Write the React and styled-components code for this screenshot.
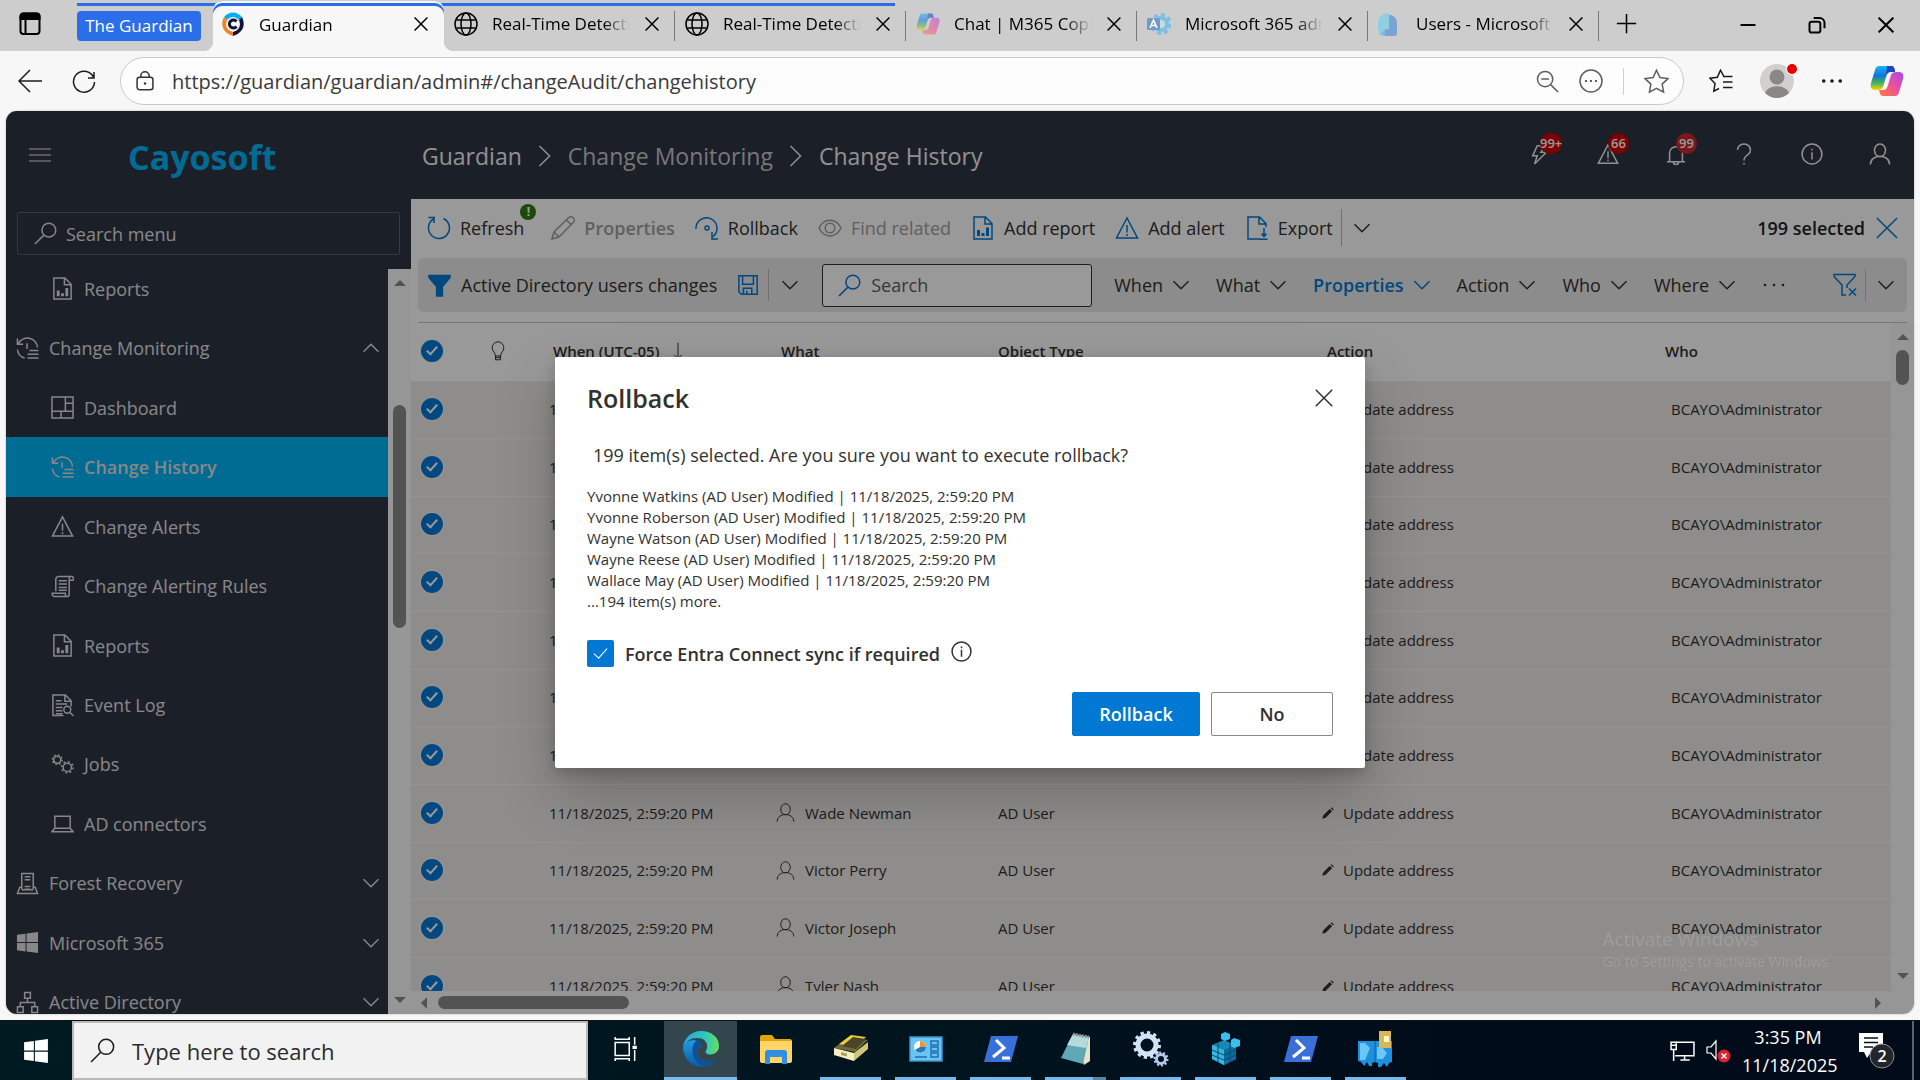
import React from "react";
import styled, { createGlobalStyle, css } from "styled-components";

const GlobalStyle = createGlobalStyle`
  *, *::before, *::after { box-sizing: border-box; }
  html, body, #root { height: 100%; }
  body {
    margin: 0;
    overflow: hidden;
    font-family: "Open Sans", "Noto Sans", "Liberation Sans", sans-serif;
    font-size: 18px;
    color: #323130;
  }
  button, input { font: inherit; color: inherit; }
  button { margin: 0; padding: 0; border: 0; background: none; }
  ul { list-style: none; margin: 0; padding: 0; }
  svg { display: block; flex: none; }
`;

/* ---------- icons ---------- */

const shapes = {
  menu: <path d="M1 6h22M1 12h22M1 18h22" />,
  chevronRight: <path d="M6 1l11 11L6 23" />,
  chevronDown: <path d="M2 7l10 10L22 7" />,
  chevronUp: <path d="M2 17L12 7l10 10" />,
  search: <><circle cx="15.5" cy="8.5" r="7.2" /><path d="M10.3 13.7L1 23" /></>,
  reports: <><path d="M3 1h11.5L21 7.5V23H3zM14 1v7h7" /><path d="M7.5 20v-6M12 20v-3M16.5 20v-8.5" strokeWidth="3" /></>,
  history: <><path d="M1.500 1.500v6h6M2.500 7A10.500 10.500 0 0 1 22.400 11M1.500 13A10.500 10.500 0 0 0 9 22M11.500 6.500v6" /><path d="M14 14h9.500M12 18h11.500M12 22h11.500" /></>,
  dashboard: <path d="M1 1h22v22H1zM15 1v15M15 7.5h8M1 16h22M10.5 16v7" />,
  warning: <><path d="M12 2L22.5 22H1.5z" /><path d="M12 9v7.5M12 18v2" /></>,
  rules: <><path d="M5 17V4.5A3 3 0 0 1 8 1.5h12.5a2.5 2.5 0 0 1 2.5 4h-4M20.5 1.5A3 3 0 0 0 19 4.5V20a2.5 2.5 0 0 1-2.5 2.5H4a2.7 2.7 0 0 1-2.7-3.5H15v1.5a2 2 0 0 0 2 2" /><path d="M8 6h8.5M8 9.5h8.5M8 13h8.5M8 16h8.5" /></>,
  eventLog: <><path d="M13 22.5H2V1h13l6 6v6M14.5 1v6.5H21" /><path d="M5 7h6M5 10.5h12M5 14h7M5 17.5h7M5 20.5h7" /><circle cx="17" cy="16.5" r="3.6" /><path d="M19.5 19l4 4" /></>,
  gears: <><circle cx="6.5" cy="7" r="3.7" /><circle cx="6.5" cy="7" r="5" strokeDasharray="1.9 2" /><circle cx="17" cy="15" r="4.3" /><circle cx="17" cy="15" r="5.9" strokeDasharray="2.1 2.5" /></>,
  laptop: <path d="M4 4.5h16V17H4zM4 17l-3 3.5h22L20 17" />,
  server: <><path d="M6 18V1.5h12V18M9 5h6M9 8h6M9 15h6M9 18h6" /><path d="M6 16H4l-2.5 6.5h21L20 16h-2M6 18.5h12" /></>,
  windows: <path d="M1 4l9-1.2v8.7H1zM11 2.6L23 1v10.5H11zM1 12.6h9v8.7L1 20zM11 12.6h12V23l-12-1.6z" fill="currentColor" stroke="none" />,
  org: <path d="M9 1.5h6v6H9zM1.5 16.5h6v6h-6zM16.5 16.5h6v6h-6zM12 7.5V12M4.5 16.5V12h15v4.5" />,
  bolt: <path d="M9 3h9l-5 7h6L6 23l3-9H4z" />,
  bell: <path d="M2 20.5h20M5 20.5V11a7 7 0 0 1 14 0v9.5M9 20.5a3 3 0 0 0 6 0" />,
  question: <path d="M5 7.5a7 6.5 0 1 1 11.5 5C13.5 14.5 12 16 12 19M12 21.5v2" />,
  info: <><circle cx="12" cy="12" r="10.8" /><path d="M12 10v8M12 6.2v2" /></>,
  user: <><ellipse cx="12" cy="8" rx="6" ry="7" /><path d="M1.5 23.5c0-12 21-12 21 0" /></>,
  refresh: <path d="M7 1v6M8 1.500H1.500M6.500 3A10.500 10.500 0 1 0 16.500 2.500" />,
  pencil: <path d="M1 23l2-7L17.5 1.8a3 3 0 0 1 4.7 4.7L8 21zM15.500 4l4.500 4.500M3 16l5 5" />,
  rollback: <><path d="M1 13A10.5 10.5 0 1 1 17.5 21" /><path d="M17 16v7h6" /><circle cx="12" cy="12" r="2" /></>,
  eye: <><path d="M1 12C6 1.5 18 1.5 23 12 18 22.5 6 22.5 1 12z" /><circle cx="12" cy="12" r="4.8" /></>,
  exportDoc: <><path d="M15 23H3V1h11.500L21 7.500V11M14 1v7h7" /><path d="M19 12v8M16.500 17.500L19 20.500l2.500-3M14.500 23.200h8" /></>,
  cross: <path d="M1 1l22 22M23 1L1 23" />,
  funnel: <path d="M1 1.5h22v2l-8 9.5v10H9V13L1 3.5z" fill="currentColor" />,
  funnelClear: <path d="M13 22H9V12L1 3.5v-2h21v2L14 12v3M16 15.5l7 7M23 15.5l-7 7" />,
  save: <path d="M1 1h22v22H4l-3-3zM5.5 1v10h13V1M6.5 23v-7h10v7M10.5 23v-4" />,
  bulb: <path d="M9 18c0-4-4-5.5-4-10a7 7 0 0 1 14 0c0 4.5-4 6-4 10zM9 18v4.5h6V18M9 20h6" />,
  arrowDown: <path d="M12 1v21M7 17l5 5 5-5" />,
  dots: <><circle cx="3" cy="12" r="1.3" fill="currentColor" stroke="none" /><circle cx="12" cy="12" r="1.3" fill="currentColor" stroke="none" /><circle cx="21" cy="12" r="1.3" fill="currentColor" stroke="none" /></>,
  dotsBold: <><circle cx="3" cy="12" r="2" fill="currentColor" stroke="none" /><circle cx="12" cy="12" r="2" fill="currentColor" stroke="none" /><circle cx="21" cy="12" r="2" fill="currentColor" stroke="none" /></>,
  smallPencil: <path d="M2 22l2-6L15 5l4 4L8 20zM16.5 3.5L18 2l4 4-1.5 1.5z" fill="currentColor" stroke="none" />,
  globe: <><circle cx="12" cy="12" r="11" /><ellipse cx="12" cy="12" rx="5" ry="11" /><path d="M2.5 8h19M2.5 16h19" /></>,
  sidebarTabs: <><rect x="2.5" y="1.5" width="19" height="20.5" rx="3" /><path d="M2.5 7V4.5a3 3 0 0 1 3-3h13a3 3 0 0 1 3 3V7z" fill="currentColor" /><path d="M7.5 7v15" /></>,
  plus: <path d="M12 1v22M1 12h22" />,
  minus: <path d="M2 12h20" />,
  restore: <><rect x="3" y="8" width="13" height="13" rx="2.5" /><path d="M8 3.5h7a6 6 0 0 1 6 6V16" /></>,
  back: <path d="M24 12H1M12 1L1 12l11 11" />,
  reload: <path d="M22 3v6h-6M22.5 13A10.5 10.5 0 1 1 20.5 6.5L22 9" />,
  lock: <><rect x="2.5" y="7.5" width="19" height="15" rx="3" /><path d="M7 7.5V6a5 5 0 0 1 10 0v1.5" /><circle cx="12" cy="15" r="1.5" fill="currentColor" stroke="none" /></>,
  zoomOut: <><circle cx="9.5" cy="9.5" r="8" /><path d="M15.5 15.5L23 23M5.5 9.5h8" /></>,
  circleDots: <><circle cx="12" cy="12" r="11" /><path d="M6 12h2M11 12h2M16 12h2" strokeWidth="2.2" /></>,
  star: <path d="M12 1.2l3.300 7 7.700 1-5.600 5.300 1.400 7.700L12 18.500l-6.800 3.700 1.400-7.700L1 9.200l7.700-1z" />,
  favorites: <path d="M15.500 7.500l-.8-.3L11.500 1.200l-3.200 7L1 9.200l5 5.300-1.200 7.700L10 19.500M14 7.500h9.500M14 13h9.500M14 18.500h9.500" />,
  taskView: <><path d="M2 6h13v12H2zM2 1v2h13V1M2 23v-2h13v2M20 1v7M20 13v10" /><path d="M20 9v3" strokeWidth="4" /></>,
  network: <><path d="M6 4h17v13H5M14 17v4M10 21h9" /><path d="M1 4h5v7H1zM1 7h5M3.5 11v11" /></>,
};

function Icon({ name, size = 24, weight = 1.5, color }) {
  return (
    <svg width={size} height={size} viewBox="0 0 24 24" fill="none" stroke="currentColor"
      strokeWidth={weight * (24 / size)} color={color} aria-hidden="true">
      {shapes[name]}
    </svg>
  );
}

function GuardianLogo() {
  return (
    <svg width="24" height="24" viewBox="0 0 24 24" aria-hidden="true">
      <path d="M3 5C8-1 16-1 21 5l-3 3C14 4 10 4 6 8z" fill="#00b0f0" />
      <path d="M3 5C-1 13 2 21 12 24v-4C5 18 4 13 6 8z" fill="#f58220" />
      <path d="M21 5c4 8 1 16-9 19v-4c7-2 8-7 6-12z" fill="#12123c" />
      <path d="M15.500 9.500a4 4 0 1 0 0 5" fill="none" stroke="#12123c" strokeWidth="3" />
    </svg>
  );
}

function CopilotLogo({ size, faded }) {
  const id = faded ? "cpf" : "cp";
  return (
    <svg width={size} height={size} viewBox="0 0 34 34" opacity={faded ? 0.55 : 1} aria-hidden="true">
      <defs>
        <linearGradient id={id + "a"} x1="0" y1="0" x2="0" y2="1">
          <stop offset="0" stopColor="#1ab6f5" /><stop offset=".4" stopColor="#1574d8" />
          <stop offset=".7" stopColor="#3fb15d" /><stop offset="1" stopColor="#ffd500" />
        </linearGradient>
        <linearGradient id={id + "b"} x1="1" y1="0" x2="0" y2="1">
          <stop offset="0" stopColor="#a54bf0" /><stop offset=".5" stopColor="#ee4f9c" />
          <stop offset="1" stopColor="#ff7a3c" />
        </linearGradient>
      </defs>
      <path d="M9 2h12c3 0 3 3 4 6h-4c-3 0-4 2-5 5l-3 10c-1 2-2 3-5 3H5c-4 0-5-3-4-7L5 6c1-3 2-4 4-4z" fill={`url(#${id}a)`} />
      <path d="M25 32H13c-3 0-3-3-4-6h4c3 0 4-2 5-5l3-10c1-2 2-3 5-3h3c4 0 5 3 4 7l-4 13c-1 3-2 4-4 4z" fill={`url(#${id}b)`} />
      <path d="M17 2h5c2 0 3 3 3 6h-5c-2 0-3 1-4 3z" fill="#1946c0" />
    </svg>
  );
}

function AdminLogo() {
  return (
    <svg width="24" height="24" viewBox="0 0 24 24" aria-hidden="true">
      <circle cx="14" cy="12" r="8" fill="#7fbfe0" />
      <circle cx="14" cy="12" r="9" fill="none" stroke="#7fbfe0" strokeWidth="4" strokeDasharray="4 3" />
      <circle cx="14" cy="12" r="4" fill="#cdd9df" />
      <rect x="0" y="6" width="13" height="12" rx="1.500" fill="#6d9cc8" />
      <path d="M3 16l3.500-8L10 16M4.500 13.500h4" fill="none" stroke="#fff" strokeWidth="1.600" />
    </svg>
  );
}

function UsersLogo() {
  return (
    <svg width="24" height="24" viewBox="0 0 24 24" aria-hidden="true">
      <path d="M6 4c6-3 12 0 13 6v11c0 2-1 3-3 3H6z" fill="#7ba4d2" />
      <path d="M0 12C0 5 4 1 11 1v16c-5 0-7 2-9 6-1-2-2-5-2-11z" fill="#8ed0e0" />
      <path d="M7 24V17h4c-4 0-7 2-9 5 1 1 3 2 5 2z" fill="#75bfe6" />
    </svg>
  );
}

function Avatar() {
  return (
    <svg width="34" height="34" viewBox="0 0 34 34" aria-hidden="true">
      <circle cx="17" cy="17" r="17" fill="#d2d0ce" />
      <circle cx="17" cy="13" r="7.500" fill="#8a8886" />
      <path d="M5 29c3-9 21-9 24 0a17 17 0 0 1-24 0z" fill="#8a8886" />
    </svg>
  );
}

const appArt = {
  edge: (
    <>
      <defs>
        <linearGradient id="eg1" x1="0" y1="0" x2="1" y2="0"><stop offset="0" stopColor="#2aa6e0" /><stop offset=".6" stopColor="#2fc6c0" /><stop offset="1" stopColor="#66e05a" /></linearGradient>
        <linearGradient id="eg2" x1="0" y1="0" x2="0" y2="1"><stop offset="0" stopColor="#1b9de2" /><stop offset="1" stopColor="#0c59a4" /></linearGradient>
      </defs>
      <path d="M18 0C8 0 0 8 0 18c2-8 8-11 14-11 8 0 11 5 10 10-1 3-2 4-1 5 2 3 13 2 13-7C36 6 28 0 18 0z" fill="url(#eg1)" />
      <path d="M0 17C1 28 8 36 19 36c6 0 11-3 14-7-9 4-19 0-19-8 0-3 2-5 5-6-2-8-17-8-19 2z" fill="url(#eg2)" />
      <path d="M14 9C7 13 7 32 22 35c4 0 9-3 11-6-9 4-19 0-19-8 0-3 2-5 5-6-1-4-3-5-5-6z" fill="#10509a" />
    </>
  ),
  explorer: (
    <>
      <path d="M2 6c0-1 1-2 2-2h10l3 4h15c1 0 2 1 2 2v20H2z" fill="#e5a50a" />
      <path d="M2 10h32v20c0 1-1 2-2 2H4c-1 0-2-1-2-2z" fill="#ffd567" />
      <path d="M7 33V22c0-2 1-3 3-3h16c2 0 3 1 3 3v11h-5v-7H12v7z" fill="#2f8fe0" />
    </>
  ),
  toolbox: (
    <>
      <path d="M1 17L16 6l19 3-13 12z" fill="#6f6a3a" />
      <path d="M6 13L18 4l15 2-11 10z" fill="#e8cf3a" />
      <path d="M9 15l11-9 13 2-10 10z" fill="#4a4526" />
      <path d="M1 17l20 5v8L1 24z" fill="#f4f0c0" />
      <path d="M21 22l14-11v7L21 30z" fill="#cfc67a" />
      <path d="M8 21l6 1.500v3L8 24z" fill="#a8a060" />
    </>
  ),
  panel: (
    <>
      <rect x="2" y="6" width="32" height="24" fill="#6cc5f0" stroke="#3b93d0" strokeWidth="1.500" />
      <circle cx="12" cy="16" r="6" fill="#fff" /><path d="M12 16v-6a6 6 0 0 1 6 6z" fill="#f0962c" /><path d="M12 16h6a6 6 0 0 1-11 3z" fill="#2878c0" />
      <path d="M23 10h7v4h-7zM23 16h7v4h-7zM23 22h7v4h-7zM7 26h12" fill="none" stroke="#1c6fb4" strokeWidth="1.500" />
    </>
  ),
  shell: (
    <>
      <path d="M8 5h27l-7 26H1z" fill="#3a6fd8" />
      <path d="M13 9l8 8-11 9M19 27h8" fill="none" stroke="#fff" strokeWidth="3" />
    </>
  ),
  notepad: (
    <>
      <path d="M16 3l16 3v24l-6 4z" fill="#e8e4cc" />
      <path d="M15 3l16 3-6 27L3 27z" fill="#5fa9b6" /><path d="M15 3l16 3-3 11L9 14z" fill="#b4dade" />
      <path d="M15 3l16 3" stroke="#888" strokeWidth="3" strokeDasharray="2 1" />
    </>
  ),
  services: (
    <>
      <circle cx="14" cy="14" r="9" fill="none" stroke="#d3e3f5" strokeWidth="5" />
      <circle cx="14" cy="14" r="12.500" fill="none" stroke="#d3e3f5" strokeWidth="3" strokeDasharray="3.300 3.200" />
      <circle cx="28" cy="28" r="4.500" fill="none" stroke="#b3cbe8" strokeWidth="3" />
      <circle cx="28" cy="28" r="6.500" fill="none" stroke="#b3cbe8" strokeWidth="2" strokeDasharray="2 2" />
    </>
  ),
  registry: (
    <>
      <path d="M4 14l12-5 12 5v14l-12 6-12-6z" fill="#1787b8" />
      <path d="M4 14l12 5v15L4 28z" fill="#35b6dc" /><path d="M16 19l12-5v14l-12 6z" fill="#0d6c9c" />
      <path d="M4 19l12 5 12-5M4 24l12 5 12-5M10 12v19M22 12v19" stroke="#0b4c70" fill="none" />
      <path d="M17 1l5 2v5l-5 2-4-2V3zM26 7l6 2v6l-6 2-3-2V9z" fill="#38c1ee" />
    </>
  ),
  gateway: (
    <>
      <path d="M0 10h17v21l-3 1v3h-3l-2-4-3 4-3-4-3-1zM17 10h17v21l-3 1-2 4-3-4-3 4h-3v-4l-3-1z" fill="#1f8fe0" />
      <path d="M2 12h5l5 5-5 12H2zM19 16h5l5 6-4 6h-6z" fill="#6cc6f8" />
      <path d="M17 10v21" stroke="#0c5fa8" />
      <path d="M21 0h12v17H21z" fill="#d9b656" /><path d="M26 5h5v6h-5z" fill="#fff6cf" />
    </>
  ),
};

function AppArt({ name }) {
  return <svg width="36" height="36" viewBox="0 0 36 36" aria-hidden="true">{appArt[name]}</svg>;
}

/* ---------- browser ---------- */

const Desktop = styled.div`
  height: 100vh;
  display: flex;
  flex-direction: column;
  background: #f7f7f7;
`;

const TabStrip = styled.div`
  height: 51px;
  display: flex;
  background: #cdcdcd;
  color: #000;
`;

const TabActions = styled.button`
  width: 77px;
  padding: 0 0 4px 18px;
  display: flex;
  align-items: center;
`;

const TabGroup = styled.div`
  display: flex;
  background: linear-gradient(#2a6eea, #2a6eea) 0 3px / calc(100% - 11px) 3px no-repeat;
`;

const GroupName = styled.button`
  height: 30px;
  width: 124px;
  margin: 11px 12px 0 0;
  border-radius: 4px;
  background: #2a6eea;
  color: #fff;
  font-size: 17px;
  line-height: 24px;
  white-space: nowrap;
`;

const Tab = styled.div`
  position: relative;
  width: 231px;
  height: 51px;
  padding: 0 16px 4px 10px;
  display: flex;
  align-items: center;
  gap: 14px;
  ${(p) => p.$divided && css`
    background: linear-gradient(#777, #777) 100% 11px / 1px 30px no-repeat;
  `}
  ${(p) => p.$active && css`
    margin-top: 1px;
    height: 50px;
    padding-left: 8px;
    background: #f7f7f7;
    border-radius: 9px 9px 0 0;
    box-shadow: inset 0 2px 0 #f7f7f7, inset 0 5px 0 #2a6eea;
    &::before, &::after {
      content: "";
      position: absolute;
      bottom: 0;
      width: 9px;
      height: 9px;
    }
    &::before { left: -9px; background: radial-gradient(circle at 0 0, transparent 9px, #f7f7f7 9px); }
    &::after { right: -9px; background: radial-gradient(circle at 100% 0, transparent 9px, #f7f7f7 9px); }
  `}
`;

const TabTitle = styled.span`
  flex: 1;
  overflow: hidden;
  white-space: nowrap;
  font-size: 17px;
  mask-image: linear-gradient(to right, #000 80%, transparent 99%);
`;

const TabSpacer = styled.div`flex: 1;`;

const WindowButton = styled.button`
  width: 69px;
  padding-bottom: 2px;
  display: flex;
  align-items: center;
  justify-content: center;
`;

const NewTab = styled(WindowButton)`width: 54px; padding-bottom: 4px;`;

const AddressRow = styled.div`
  height: 60px;
  padding: 0 16px 0 18px;
  display: flex;
  align-items: center;
  color: #1b1b1b;
`;

const PlainButton = styled.button`
  display: flex;
  align-items: center;
  justify-content: center;
`;

const NavButtons = styled.div`display: flex; gap: 30px; margin-right: 24px;`;

const AddressPill = styled.div`
  flex: 1;
  height: 48px;
  padding: 0 14px;
  display: flex;
  align-items: center;
  border: 1px solid #cacaca;
  border-radius: 24px;
  background: #fdfdfd;
  color: #5d5d5d;
`;

const AddressInput = styled.input`
  flex: 1;
  margin: 0 15px;
  border: 0;
  outline: 0;
  background: transparent;
  color: #3a3a3a;
  font-size: 20px;
`;

const PillTools = styled.div`
  display: flex;
  align-items: center;
  gap: 20px;
`;

const Divider = styled.span`
  width: 1px;
  height: ${(p) => p.$h}px;
  background: ${(p) => p.$c};
`;

const BrowserTools = styled.div`
  margin-left: 25px;
  display: flex;
  align-items: center;
  gap: 27px;
`;

const AvatarButton = styled(PlainButton)`
  position: relative;
  &::after {
    content: "";
    position: absolute;
    top: 0;
    right: -3px;
    width: 10px;
    height: 10px;
    border-radius: 50%;
    background: #e60000;
    box-shadow: 0 0 0 1px #f7f7f7;
  }
`;

/* ---------- application frame ---------- */

const AppFrame = styled.div`
  position: relative;
  flex: 1;
  min-height: 0;
  margin: 0 6px 6px;
  display: flex;
  flex-direction: column;
  border-radius: 11px;
  overflow: hidden;
  background: #fff;
  box-shadow: 0 0 2px #aaa;
`;

const TopBar = styled.header`
  height: 88px;
  flex: none;
  padding-left: 22px;
  display: flex;
  align-items: center;
  background: #2e3444;
  color: #f3f2f1;
`;

const Brand = styled.div`
  width: 294px;
  margin-left: 76px;
  padding-top: 4px;
  color: #00b2f5;
  font-size: 34px;
  font-weight: 700;
  line-height: 44px;
`;

const Crumbs = styled.nav`
  flex: 1;
  padding-top: 2px;
  display: flex;
  align-items: center;
  gap: 12px;
  font-size: 23px;
  line-height: 32px;
`;

const Crumb = styled.a`
  color: ${(p) => (p.$dim ? "#c8c6c4" : "#f3f2f1")};
  text-decoration: none;
  white-space: nowrap;
`;

const TopIcons = styled.div`display: flex;`;

const TopIcon = styled.button`
  position: relative;
  width: 68px;
  height: 60px;
  padding-bottom: 2px;
  display: flex;
  align-items: center;
  justify-content: center;
`;

const CountBadge = styled.span`
  position: absolute;
  top: 8px;
  left: 34px;
  min-width: 21px;
  height: 21px;
  border-radius: 11px;
  background: ${(p) => (p.$soft ? "#c8282c" : "#d00000")};
  color: #fff;
  font-size: 13px;
  font-weight: 600;
  line-height: 21px;
  text-align: center;
`;

const Body = styled.div`
  flex: 1;
  min-height: 0;
  display: flex;
`;

/* ---------- side menu ---------- */

const Side = styled.aside`
  width: 405px;
  flex: none;
  display: flex;
  flex-direction: column;
  background: #2e3444;
  color: #e1e1e1;
`;

const MenuSearch = styled.label`
  height: 43px;
  margin: 13px 11px 14px;
  padding: 0 16px;
  display: flex;
  align-items: center;
  gap: 9px;
  border: 1px solid #605e5c;
  border-radius: 2px;
`;

const SearchInput = styled.input`
  flex: 1;
  min-width: 0;
  padding: 0;
  border: 0;
  outline: 0;
  background: transparent;
  font-size: 18px;
  &::placeholder { color: ${(p) => p.$hint}; opacity: 1; }
`;

const SideScroll = styled.div`
  flex: 1;
  min-height: 0;
  display: flex;
`;

const MenuWindow = styled.nav`
  flex: 1;
  overflow: hidden;
  display: flex;
`;

const MenuList = styled.ul`
  flex: 1;
  margin: -10px 0 -18px;
  display: flex;
  flex-direction: column;
`;

const MenuItem = styled.li`
  flex: 1;
  display: flex;
`;

const MenuLink = styled.a`
  flex: 1;
  padding: 0 8px 0 ${(p) => (p.$nested ? 45 : 10)}px;
  display: flex;
  align-items: center;
  gap: 10px;
  color: inherit;
  text-decoration: none;
  font-size: 18px;
  font-weight: ${(p) => (p.$active ? 600 : 400)};
  background: ${(p) => (p.$active ? "#00b2f5" : "transparent")};
`;

const MenuLabel = styled.span`flex: 1;`;

/* ---------- scroll bars ---------- */

const Track = styled.div`
  flex: none;
  width: ${(p) => (p.$h ? "auto" : "23px")};
  height: ${(p) => (p.$h ? "23px" : "auto")};
  padding: ${(p) => (p.$h ? "0 10px" : "11px 0")};
  display: flex;
  flex-direction: ${(p) => (p.$h ? "row" : "column")};
  align-items: center;
  background: #fafafa;
`;

const Arrow = styled.span`
  border: 6px solid transparent;
  ${(p) => p.$dir === "up" && "border-top: 0; border-bottom-color: #8a8a8a;"}
  ${(p) => p.$dir === "down" && "border-bottom: 0; border-top-color: #8a8a8a;"}
  ${(p) => p.$dir === "left" && "border-left: 0; border-right-color: #8a8a8a;"}
  ${(p) => p.$dir === "right" && "border-right: 0; border-left-color: #8a8a8a;"}
`;

const Gap = styled.span`flex: ${(p) => (p.$size ? `0 0 ${p.$size}px` : 1)};`;

const Thumb = styled.span`
  width: ${(p) => p.$w}px;
  height: ${(p) => p.$h}px;
  border-radius: 7px;
  background: #8a8a8a;
`;

/* ---------- main area ---------- */

const Main = styled.main`
  flex: 1;
  min-width: 0;
  display: flex;
  flex-direction: column;
  background: #fff;
`;

const CommandBar = styled.div`
  height: 59px;
  flex: none;
  padding: 0 16px 2px;
  display: flex;
  align-items: center;
  gap: 20px;
  font-size: 18px;
`;

const Command = styled.button`
  position: relative;
  display: flex;
  align-items: center;
  gap: 9px;
  white-space: nowrap;
  color: ${(p) => (p.$off ? "#a19f9d" : "#323130")};
  font-weight: ${(p) => (p.$strong ? 600 : 400)};
  svg { color: ${(p) => (p.$off ? "#a19f9d" : "#0078d4")}; }
`;

const AlertDot = styled.span`
  position: absolute;
  top: -12px;
  right: -12px;
  width: 16px;
  height: 16px;
  border-radius: 50%;
  background: #317b12;
  color: #fff;
  font-size: 12px;
  font-weight: 700;
  line-height: 16px;
  text-align: center;
`;

const RefreshCommand = styled(Command)`margin-right: 7px;`;

const SplitChevron = styled.button`
  height: ${(p) => p.$h}px;
  padding-left: ${(p) => p.$pad}px;
  border-left: 1px solid #bbb;
  display: flex;
  align-items: center;
`;

const CommandTail = styled.div`display: flex; align-items: center; gap: 8px;`;

const Selection = styled.div`
  margin-left: auto;
  display: flex;
  align-items: center;
  gap: 11px;
  font-weight: 600;
  color: #201f1e;
  button { color: #0078d4; }
`;

const FilterBar = styled.div`
  height: 54px;
  flex: none;
  margin: 0 7px;
  padding: 0 12px 0 10px;
  display: flex;
  align-items: center;
  border-radius: 6px;
  background: #e9e9e9;
  font-size: 18px;
`;

const FilterName = styled.button`
  display: flex;
  align-items: center;
  gap: 10px;
  white-space: nowrap;
  margin-right: 21px;
  svg { color: #0078d4; }
`;

const FilterSave = styled(PlainButton)`margin-right: 10px; color: #0078d4;`;

const FilterSearch = styled.label`
  width: 270px;
  height: 43px;
  margin-left: 23px;
  margin-right: 22px;
  padding: 0 15px;
  display: flex;
  align-items: center;
  gap: 10px;
  border: 1px solid #323130;
  border-radius: 3px;
  background: #fff;
  svg { color: #0078d4; }
`;

const Facets = styled.div`
  flex: 1;
  display: flex;
  align-items: center;
  gap: 26px;
`;

const Facet = styled.button`
  display: flex;
  align-items: center;
  gap: 9px;
  white-space: nowrap;
  color: ${(p) => (p.$on ? "#0078d4" : "inherit")};
  font-weight: ${(p) => (p.$on ? 600 : 400)};
`;

const ClearFilter = styled(PlainButton)`margin-right: 8px; color: #0078d4;`;

const Rule = styled.div`
  height: 1px;
  flex: none;
  margin: 10px 7px 0;
  background: #c8c6c4;
`;

const GridArea = styled.div`
  flex: 1;
  min-height: 0;
  display: flex;
`;

const GridColumn = styled.div`
  flex: 1;
  min-width: 0;
  display: flex;
  flex-direction: column;
`;

const GridWindow = styled.div`
  flex: 1;
  min-height: 0;
  overflow: hidden;
`;

const Table = styled.table`
  width: 100%;
  table-layout: fixed;
  border-collapse: separate;
  border-spacing: 0;
  font-size: 15px;
`;

const HeadCell = styled.th`
  width: ${(p) => (p.$w ? `${p.$w}px` : "auto")};
  height: 58px;
  padding: 0 0 2px ${(p) => p.$pad}px;
  text-align: left;
  font-weight: 600;
  white-space: nowrap;
`;

const Row = styled.tr`
  height: 58px;
  background: #edebe9;
  &:nth-child(3n) { height: 57px; }
`;

const Cell = styled.td`
  padding: 0 0 2px ${(p) => p.$pad}px;
  border-bottom: 1px solid #faf9f8;
  white-space: nowrap;
`;

const Inline = styled.span`
  display: flex;
  align-items: center;
  gap: ${(p) => p.$gap}px;
`;

const RoundCheck = styled.input`
  appearance: none;
  display: block;
  position: relative;
  width: 22px;
  height: 22px;
  margin: 0;
  border-radius: 50%;
  background: #0078d4;
  box-shadow: 0 0 0 1px #faf9f8;
  &::after {
    content: "";
    position: absolute;
    left: 8px;
    top: 4px;
    width: 6px;
    height: 11px;
    border: solid #fff;
    border-width: 0 2px 2px 0;
    transform: rotate(42deg);
  }
`;

/* ---------- dialog ---------- */

const Scrim = styled.div`
  position: absolute;
  inset: 0;
  display: flex;
  align-items: center;
  justify-content: center;
  background: rgba(0, 0, 0, 0.4);
`;

const Dialog = styled.section`
  width: 810px;
  padding: 24px 32px 32px;
  border-radius: 2px;
  background: #fff;
  color: #323130;
  box-shadow: 0 26px 58px rgba(0, 0, 0, 0.22), 0 5px 14px rgba(0, 0, 0, 0.18);
`;

const DialogHead = styled.div`
  height: 34px;
  display: flex;
  align-items: center;
  justify-content: space-between;
`;

const DialogTitle = styled.h2`
  margin: 0;
  font-size: 25px;
  font-weight: 600;
  line-height: 34px;
`;

const Question = styled.p`
  margin: 26px 0 17px;
  padding-left: 6px;
  font-size: 18px;
  line-height: 28px;
`;

const Changes = styled.ul`
  font-size: 15px;
  line-height: 21px;
`;

const SyncRow = styled.div`
  margin-top: 28px;
  height: 27px;
  display: flex;
  align-items: center;
  gap: 11px;
  font-size: 18px;
  font-weight: 600;
`;

const SyncCheck = styled.input`
  appearance: none;
  position: relative;
  width: 27px;
  height: 27px;
  margin: 0;
  border-radius: 2px;
  background: #0078d4;
  &::after {
    content: "";
    position: absolute;
    left: 10px;
    top: 5px;
    width: 7px;
    height: 13px;
    border: solid #fff;
    border-width: 0 1px 1px 0;
    transform: rotate(42deg);
  }
`;

const InfoButton = styled(PlainButton)`padding-bottom: 4px;`;

const DialogActions = styled.div`
  margin-top: 25px;
  display: flex;
  justify-content: flex-end;
  gap: 11px;
`;

const ActionButton = styled.button`
  width: ${(p) => (p.$primary ? 128 : 122)}px;
  height: 44px;
  border: 1px solid ${(p) => (p.$primary ? "#0078d4" : "#8a8886")};
  border-radius: 2px;
  background: ${(p) => (p.$primary ? "#0078d4" : "#fff")};
  color: ${(p) => (p.$primary ? "#fff" : "#323130")};
  font-size: 18px;
  font-weight: 600;
`;

/* ---------- desktop overlay and taskbar ---------- */

const Watermark = styled.div`
  position: fixed;
  right: 88px;
  bottom: 108px;
  color: rgba(255, 255, 255, 0.14);
  font-size: 14px;
  line-height: 20px;
  pointer-events: none;
  strong { display: block; font-size: 19px; font-weight: 400; line-height: 26px; }
`;

const Taskbar = styled.footer`
  height: 60px;
  flex: none;
  display: flex;
  border-top: 1px solid #111;
  background: linear-gradient(to right, #001a22, #00141e 50%, #000c1a 75%, #000a18);
  color: #fff;
`;

const StartButton = styled(PlainButton)`width: 72px;`;

const TaskSearch = styled.label`
  width: 516px;
  padding: 0 16px;
  display: flex;
  align-items: center;
  gap: 17px;
  border: 2px solid #b9b9b9;
  background: #f2f2f2;
  color: #1b1b1b;
  input { font-size: 22px; }
`;

const TaskButton = styled.button`
  width: 75px;
  padding: ${(p) => (p.$active ? "0 1px" : "0 7px")};
  display: flex;
  flex-direction: column;
  align-items: stretch;
  background: ${(p) => (p.$active ? "#33464d" : "transparent")};
  background-clip: content-box;
`;

const TaskArt = styled.span`
  flex: 1;
  display: flex;
  align-items: center;
  justify-content: center;
`;

const TaskLine = styled.span`
  height: 3px;
  background: ${(p) => (p.$on ? "#76b9ed" : "transparent")};
  ${(p) => p.$stacked && "background: linear-gradient(to right, #76b9ed 78%, #5586a8 78%);"}
`;

const Tray = styled.div`
  margin-left: auto;
  display: flex;
  align-items: center;
`;

const TrayIcon = styled(PlainButton)`margin-right: 11px;`;

const Clock = styled.button`
  width: 92px;
  margin-right: 24px;
  font-size: 18px;
  line-height: 28px;
  text-align: center;
  white-space: nowrap;
`;

const ActionCenter = styled(PlainButton)`width: 38px; margin-right: 16px;`;

const ShowDesktop = styled.button`
  width: 8px;
  height: 100%;
  border-left: 2px solid #5a626b;
`;

/* ---------- data ---------- */

const menu = [
  { icon: "reports", label: "Reports", nested: true },
  { icon: "history", label: "Change Monitoring", arrow: "chevronUp" },
  { icon: "dashboard", label: "Dashboard", nested: true },
  { icon: "history", label: "Change History", nested: true, active: true },
  { icon: "warning", label: "Change Alerts", nested: true },
  { icon: "rules", label: "Change Alerting Rules", nested: true },
  { icon: "reports", label: "Reports", nested: true },
  { icon: "eventLog", label: "Event Log", nested: true },
  { icon: "gears", label: "Jobs", nested: true },
  { icon: "laptop", label: "AD connectors", nested: true },
  { icon: "server", label: "Forest Recovery", arrow: "chevronDown" },
  { icon: "windows", label: "Microsoft 365", arrow: "chevronDown" },
  { icon: "org", label: "Active Directory", arrow: "chevronDown" },
];

const tabs = [
  { title: "Real-Time Detection", art: <Icon name="globe" /> },
  { title: "Real-Time Detection", art: <Icon name="globe" /> },
  { title: "Chat | M365 Copilot", art: <CopilotLogo size={24} faded /> },
  { title: "Microsoft 365 admin", art: <AdminLogo /> },
  { title: "Users - Microsoft 365", art: <UsersLogo /> },
];

const people = [
  "Yvonne Watkins", "Yvonne Roberson", "Wayne Watson", "Wayne Reese", "Wallace May",
  "Wade Patton", "Wade Owens", "Wade Newman", "Victor Perry", "Victor Joseph", "Tyler Nash",
];

const stamp = "11/18/2025, 2:59:20 PM";

const facets = ["When", "What", "Properties", "Action", "Who", "Where"];

const taskApps = [
  { art: "edge", active: true, open: true, name: "Edge" },
  { art: "explorer", name: "File Explorer" },
  { art: "toolbox", open: true, name: "Tools" },
  { art: "panel", open: true, name: "Control Panel" },
  { art: "shell", open: true, name: "PowerShell" },
  { art: "notepad", open: true, stacked: true, name: "Notepad" },
  { art: "services", open: true, name: "Services" },
  { art: "registry", open: true, name: "Registry Editor" },
  { art: "shell", open: true, name: "PowerShell ISE" },
  { art: "gateway", open: true, name: "Server Manager" },
];

/* ---------- sections ---------- */

function BrowserTab({ tab }) {
  return (
    <Tab $divided>
      {tab.art}
      <TabTitle>{tab.title}</TabTitle>
      <PlainButton aria-label="Close tab"><Icon name="cross" size={14} /></PlainButton>
    </Tab>
  );
}

function Browser() {
  return (
    <>
      <TabStrip>
        <TabActions aria-label="Tab actions"><Icon name="sidebarTabs" weight={2} /></TabActions>
        <TabGroup>
          <GroupName>The Guardian</GroupName>
          <Tab $active>
            <GuardianLogo />
            <TabTitle>Guardian</TabTitle>
            <PlainButton aria-label="Close tab"><Icon name="cross" size={14} /></PlainButton>
          </Tab>
          {tabs.slice(0, 2).map((t, i) => <BrowserTab key={i} tab={t} />)}
        </TabGroup>
        {tabs.slice(2).map((t, i) => <BrowserTab key={i} tab={t} />)}
        <NewTab aria-label="New tab"><Icon name="plus" size={21} /></NewTab>
        <TabSpacer />
        <WindowButton aria-label="Minimize"><Icon name="minus" size={18} weight={2} /></WindowButton>
        <WindowButton aria-label="Restore"><Icon name="restore" size={20} weight={2} /></WindowButton>
        <WindowButton aria-label="Close"><Icon name="cross" size={16} weight={2} /></WindowButton>
      </TabStrip>
      <AddressRow>
        <NavButtons>
          <PlainButton aria-label="Back"><Icon name="back" /></PlainButton>
          <PlainButton aria-label="Reload"><Icon name="reload" /></PlainButton>
        </NavButtons>
        <AddressPill>
          <Icon name="lock" size={20} color="#333" />
          <AddressInput aria-label="Address" defaultValue="https://guardian/guardian/admin#/changeAudit/changehistory" />
          <PillTools>
            <PlainButton aria-label="Zoom out"><Icon name="zoomOut" size={23} /></PlainButton>
            <PlainButton aria-label="More"><Icon name="circleDots" /></PlainButton>
            <Divider $h={27} $c="#d0d0d0" />
            <PlainButton aria-label="Add to favorites"><Icon name="star" size={25} /></PlainButton>
          </PillTools>
        </AddressPill>
        <BrowserTools>
          <PlainButton aria-label="Favorites"><Icon name="favorites" /></PlainButton>
          <AvatarButton aria-label="Profile"><Avatar /></AvatarButton>
          <PlainButton aria-label="Settings"><Icon name="dotsBold" size={22} /></PlainButton>
          <PlainButton aria-label="Copilot"><CopilotLogo size={34} /></PlainButton>
        </BrowserTools>
      </AddressRow>
    </>
  );
}

function Header() {
  return (
    <TopBar>
      <PlainButton aria-label="Toggle menu"><Icon name="menu" size={24} weight={1} /></PlainButton>
      <Brand>Cayosoft</Brand>
      <Crumbs aria-label="Breadcrumb">
        <Crumb href="#guardian">Guardian</Crumb>
        <Icon name="chevronRight" size={22} />
        <Crumb href="#monitoring" $dim>Change Monitoring</Crumb>
        <Icon name="chevronRight" size={22} />
        <Crumb href="#history">Change History</Crumb>
      </Crumbs>
      <TopIcons>
        <TopIcon aria-label="Activity"><Icon name="bolt" size={22} /><CountBadge>99+</CountBadge></TopIcon>
        <TopIcon aria-label="Alerts"><Icon name="warning" size={22} /><CountBadge>66</CountBadge></TopIcon>
        <TopIcon aria-label="Notifications"><Icon name="bell" size={22} /><CountBadge $soft>99</CountBadge></TopIcon>
        <TopIcon aria-label="Help"><Icon name="question" size={22} /></TopIcon>
        <TopIcon aria-label="About"><Icon name="info" size={22} /></TopIcon>
        <TopIcon aria-label="Account"><Icon name="user" size={22} /></TopIcon>
      </TopIcons>
    </TopBar>
  );
}

function SideMenu() {
  return (
    <Side>
      <MenuSearch>
        <Icon name="search" size={23} />
        <SearchInput aria-label="Search menu" placeholder="Search menu" $hint="#e1e1e1" />
      </MenuSearch>
      <SideScroll>
        <MenuWindow aria-label="Main menu">
          <MenuList>
            {menu.map((m, i) => (
              <MenuItem key={i}>
                <MenuLink href={`#menu-${i}`} $nested={m.nested} $active={m.active}>
                  <Icon name={m.icon} size={23} />
                  <MenuLabel>{m.label}</MenuLabel>
                  {m.arrow && <Icon name={m.arrow} size={18} />}
                </MenuLink>
              </MenuItem>
            ))}
          </MenuList>
        </MenuWindow>
        <Track>
          <Arrow $dir="up" />
          <Gap $size={119} />
          <Thumb $w={13} $h={223} />
          <Gap />
          <Arrow $dir="down" />
        </Track>
      </SideScroll>
    </Side>
  );
}

function Commands() {
  return (
    <CommandBar>
      <RefreshCommand><Icon name="refresh" />Refresh<AlertDot>!</AlertDot></RefreshCommand>
      <Command $off $strong><Icon name="pencil" />Properties</Command>
      <Command><Icon name="rollback" />Rollback</Command>
      <Command $off><Icon name="eye" />Find related</Command>
      <Command><Icon name="reports" />Add report</Command>
      <Command><Icon name="warning" />Add alert</Command>
      <CommandTail>
        <Command><Icon name="exportDoc" />Export</Command>
        <SplitChevron $h={37} $pad={11} aria-label="More export options"><Icon name="chevronDown" size={18} /></SplitChevron>
      </CommandTail>
      <Selection>
        199 selected
        <PlainButton aria-label="Clear selection"><Icon name="cross" size={22} /></PlainButton>
      </Selection>
    </CommandBar>
  );
}

function Filters() {
  return (
    <FilterBar>
      <FilterName><Icon name="funnel" size={23} />Active Directory users changes</FilterName>
      <FilterSave aria-label="Save view"><Icon name="save" size={20} /></FilterSave>
      <SplitChevron $h={32} $pad={12} aria-label="View options"><Icon name="chevronDown" size={18} /></SplitChevron>
      <FilterSearch>
        <Icon name="search" size={23} />
        <SearchInput aria-label="Search" placeholder="Search" $hint="#605e5c" />
      </FilterSearch>
      <Facets>
        {facets.map((f) => (
          <Facet key={f} $on={f === "Properties"}>{f}<Icon name="chevronDown" size={18} /></Facet>
        ))}
        <PlainButton aria-label="More filters"><Icon name="dots" size={24} /></PlainButton>
      </Facets>
      <ClearFilter aria-label="Clear filters"><Icon name="funnelClear" size={24} /></ClearFilter>
      <SplitChevron $h={32} $pad={11} aria-label="Filter options"><Icon name="chevronDown" size={18} /></SplitChevron>
    </FilterBar>
  );
}

function Grid() {
  return (
    <GridArea>
      <GridColumn>
        <GridWindow>
          <Table>
            <thead>
              <tr>
                <HeadCell $w={54} $pad={10}><RoundCheck type="checkbox" defaultChecked aria-label="Select all" /></HeadCell>
                <HeadCell $w={76} $pad={23}><Icon name="bulb" size={20} weight={1} /></HeadCell>
                <HeadCell $w={228} $pad={12}><Inline $gap={10}>When (UTC-05)<Icon name="arrowDown" size={18} weight={1} /></Inline></HeadCell>
                <HeadCell $w={221} $pad={12}>What</HeadCell>
                <HeadCell $w={325} $pad={8}>Object Type</HeadCell>
                <HeadCell $w={344} $pad={12}>Action</HeadCell>
                <HeadCell $pad={6}>Who</HeadCell>
              </tr>
            </thead>
            <tbody>
              {people.map((name) => (
                <Row key={name}>
                  <Cell $pad={10}><RoundCheck type="checkbox" defaultChecked aria-label={`Select ${name}`} /></Cell>
                  <Cell $pad={23} />
                  <Cell $pad={8}>{stamp}</Cell>
                  <Cell $pad={7}><Inline $gap={10}><Icon name="user" size={19} weight={1} />{name}</Inline></Cell>
                  <Cell $pad={8}>AD User</Cell>
                  <Cell $pad={6}><Inline $gap={8}><Icon name="smallPencil" size={14} />Update address</Inline></Cell>
                  <Cell $pad={12}>BCAYO\Administrator</Cell>
                </Row>
              ))}
            </tbody>
          </Table>
        </GridWindow>
        <Track $h>
          <Arrow $dir="left" />
          <Gap $size={11} />
          <Thumb $w={191} $h={13} />
          <Gap />
          <Arrow $dir="right" />
        </Track>
      </GridColumn>
      <Track>
        <Arrow $dir="up" />
        <Gap $size={10} />
        <Thumb $w={13} $h={35} />
        <Gap />
        <Arrow $dir="down" />
        <Gap $size={24} />
      </Track>
    </GridArea>
  );
}

function RollbackDialog() {
  return (
    <Scrim>
      <Dialog role="dialog" aria-labelledby="rollback-title">
        <DialogHead>
          <DialogTitle id="rollback-title">Rollback</DialogTitle>
          <PlainButton aria-label="Close"><Icon name="cross" size={18} /></PlainButton>
        </DialogHead>
        <Question>199 item(s) selected. Are you sure you want to execute rollback?</Question>
        <Changes>
          {people.slice(0, 5).map((name) => (
            <li key={name}>{`${name} (AD User) Modified | ${stamp}`}</li>
          ))}
          <li>...194 item(s) more.</li>
        </Changes>
        <SyncRow>
          <SyncCheck id="force-sync" type="checkbox" defaultChecked />
          <label htmlFor="force-sync">Force Entra Connect sync if required</label>
          <InfoButton aria-label="About sync"><Icon name="info" size={21} /></InfoButton>
        </SyncRow>
        <DialogActions>
          <ActionButton $primary>Rollback</ActionButton>
          <ActionButton>No</ActionButton>
        </DialogActions>
      </Dialog>
    </Scrim>
  );
}

function WindowsTaskbar() {
  return (
    <Taskbar>
      <StartButton aria-label="Start"><Icon name="windows" size={26} /></StartButton>
      <TaskSearch>
        <Icon name="search" size={25} />
        <SearchInput aria-label="Type here to search" placeholder="Type here to search" $hint="#2b2b2b" />
      </TaskSearch>
      <TaskButton aria-label="Task View"><TaskArt><Icon name="taskView" size={26} /></TaskArt><TaskLine /></TaskButton>
      {taskApps.map((a) => (
        <TaskButton key={a.name} aria-label={a.name} $active={a.active}>
          <TaskArt><AppArt name={a.art} /></TaskArt>
          <TaskLine $on={a.open} $stacked={a.stacked} />
        </TaskButton>
      ))}
      <Tray>
        <TrayIcon aria-label="Network"><Icon name="network" size={25} /></TrayIcon>
        <TrayIcon aria-label="Volume">
          <svg width="25" height="25" viewBox="0 0 25 25" aria-hidden="true">
            <path d="M1 9h4l5-6v18l-5-6H1z" fill="none" stroke="#fff" strokeWidth="1.200" />
            <circle cx="18" cy="18" r="6.500" fill="#e0202c" />
            <path d="M15.500 15.500l5 5M20.500 15.500l-5 5" stroke="#fff" strokeWidth="1.500" />
          </svg>
        </TrayIcon>
        <Clock>3:35 PM<br />11/18/2025</Clock>
        <ActionCenter aria-label="2 notifications">
          <svg width="38" height="38" viewBox="0 0 38 38" aria-hidden="true">
            <path d="M1 1h24v19H13l-4 6-3-6H1z" fill="#fff" />
            <path d="M6 6h14M6 10.500h14M6 15h9" stroke="#00101c" strokeWidth="1.300" />
            <circle cx="24" cy="24" r="12" fill="#22262c" stroke="#8a8f94" />
            <text x="24" y="30" fill="#fff" fontSize="16" fontWeight="600" textAnchor="middle">2</text>
          </svg>
        </ActionCenter>
        <ShowDesktop aria-label="Show desktop" />
      </Tray>
    </Taskbar>
  );
}

export default function App() {
  return (
    <Desktop>
      <GlobalStyle />
      <Browser />
      <AppFrame>
        <Header />
        <Body>
          <SideMenu />
          <Main>
            <Commands />
            <Filters />
            <Rule />
            <Grid />
          </Main>
        </Body>
        <RollbackDialog />
      </AppFrame>
      <WindowsTaskbar />
      <Watermark><strong>Activate Windows</strong>Go to Settings to activate Windows.</Watermark>
    </Desktop>
  );
}
